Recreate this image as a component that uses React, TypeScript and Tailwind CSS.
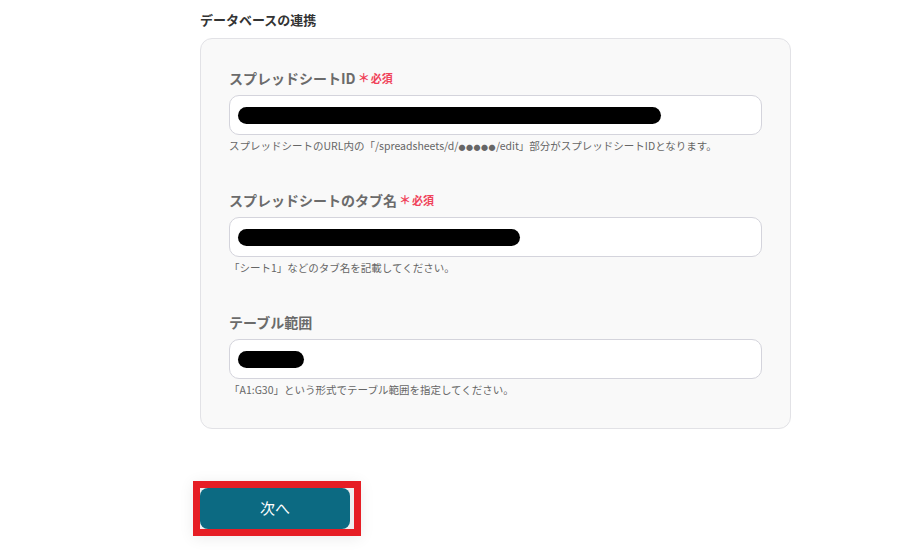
const fields = [
  {
    label: 'スプレッドシートID',
    required: true,
    blob: 'w-[423px]',
    help: (
      <>
        スプレッドシートのURL内の「/spreadsheets/d/<span className="text-[7px] leading-none tracking-[0.5px] align-middle">●●●●●</span>/edit」部分がスプレッドシートIDとなります。
      </>
    ),
  },
  {
    label: 'スプレッドシートのタブ名',
    required: true,
    blob: 'w-[282px]',
    help: '「シート1」などのタブ名を記載してください。',
  },
  {
    label: 'テーブル範囲',
    required: false,
    blob: 'w-[66px]',
    help: '「A1:G30」という形式でテーブル範囲を指定してください。',
  },
];

export default function App() {
  return (
    <div
      className="w-[921px] h-[557px] bg-white pl-[200px] pt-[10px] overflow-hidden"
      style={{ fontFamily: '"Noto Sans CJK JP", "Noto Sans", sans-serif' }}
    >
      <h2 className="text-[13px] leading-[20px] font-bold text-[#333]">データベースの連携</h2>

      {/* Panel */}
      <div className="mt-[8px] w-[591px] rounded-[12px] border border-[#e2e2e6] bg-[#f9f9f9] px-[28px] pt-[29px] pb-[30px] flex flex-col gap-[36px]">
        {fields.map((f) => (
          <div key={f.label}>
            <div className="flex items-center h-[20px] leading-[20px] overflow-hidden">
              <span className="text-[14px] font-bold text-[#6b6b6b]">{f.label}</span>
              {f.required && (
                <span className="ml-[2px] flex items-center text-[11px] font-bold text-[#f0435a]">
                  <span className="text-[12px] mr-[1px]">＊</span>必須
                </span>
              )}
            </div>
            <div className="mt-[7px] h-[40px] rounded-[10px] border border-[#d4d4dc] bg-white flex items-center pl-[8px]">
              <div className={`${f.blob} h-[17px] rounded-full bg-black`} />
            </div>
            <p className="mt-[3px] h-[16px] text-[10.5px] leading-[16px] text-[#666] whitespace-nowrap">{f.help}</p>
          </div>
        ))}
      </div>

      {/* Next button with highlight */}
      <div className="mt-[52px] -ml-[7px] inline-flex border-[7px] border-[#e61e25] bg-[#eef0f1] pr-[4px] shadow-[0_2px_14px_rgba(0,0,0,0.08)]">
        <button className="w-[150px] h-[41px] rounded-[8px] bg-[#0c6a82] text-white text-[15px]">次へ</button>
      </div>
    </div>
  );
}
